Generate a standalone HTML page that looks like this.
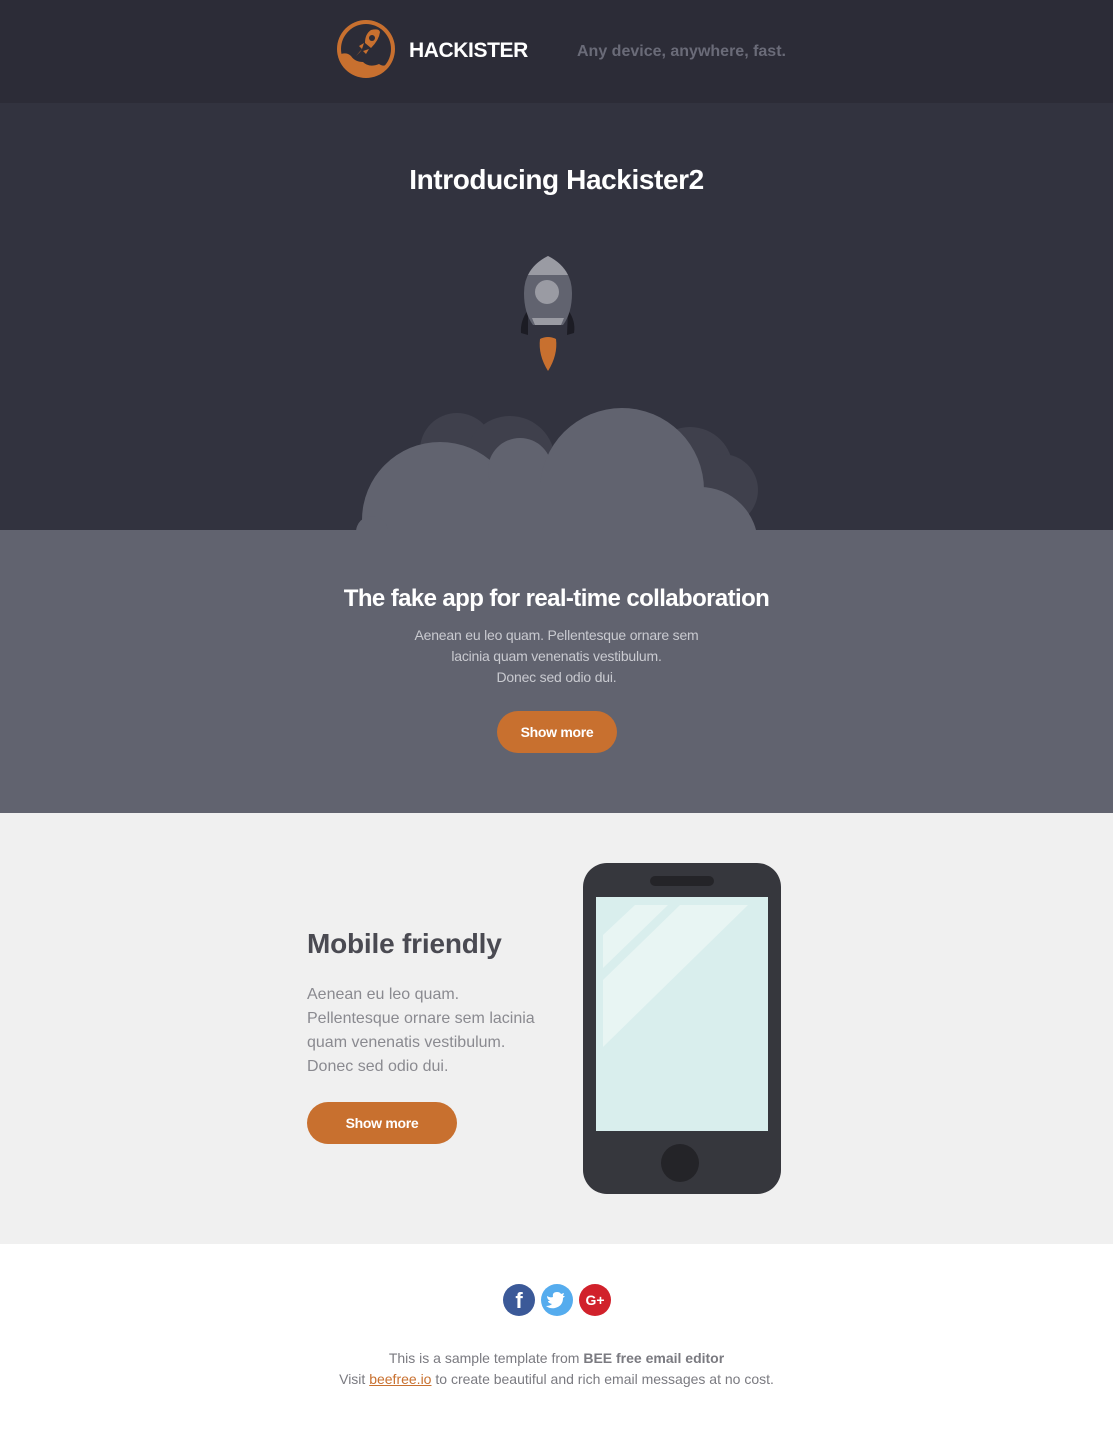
<!DOCTYPE html>
<html><head><meta charset="utf-8"><style>
*{margin:0;padding:0;box-sizing:border-box}
body{width:1113px;height:1437px;font-family:"Liberation Sans",sans-serif;background:#fff;overflow:hidden}
.hdr{height:103px;background:#2c2c37;position:relative}
.hero{height:427px;background:#32333f;position:relative}
.band{height:283px;background:#61636f;position:relative;text-align:center}
.mob{height:431px;background:#f0f0f0;position:relative}
.foot{position:relative;height:193px;text-align:center}
.btn{display:inline-block;background:#c8702f;color:#fff;font-weight:bold;font-size:14px;border-radius:21px;height:42px;line-height:42px;text-align:center;letter-spacing:-0.3px}
</style></head><body>
<div class="hdr">
 <svg style="position:absolute;left:335px;top:18px" width="62" height="62" viewBox="0 0 62 62">
  <circle cx="31" cy="31" r="29" fill="#c8702f"/>
  <circle cx="31" cy="31" r="25" fill="#2c2c37"/>
  <path d="M6 36 Q12 34 16 38 Q20 44 28 44 Q34 50 44 46 Q50 50 54 44 Q52 54 40 57 Q24 60 12 50 Q6 44 6 36Z" fill="#c8702f"/>
  <path d="M36 12 Q44 10 45 14 Q44 22 36 30 L30 25 Q30 16 36 12Z" fill="#c8702f"/>
  <circle cx="37" cy="20" r="3" fill="#2c2c37"/>
  <path d="M29 25 L24 28 L27 31Z M34 31 L31 36 L28 33Z M27 31 L21 38 L25 34Z" fill="#c8702f"/>
 </svg>
 <div style="position:absolute;left:409px;top:39px;color:#fff;font-size:21px;font-weight:bold;letter-spacing:-0.4px">HACKISTER</div>
 <div style="position:absolute;left:577px;top:43px;color:#6a6b78;font-size:16px;font-weight:bold">Any device, anywhere, fast.</div>
</div>
<div class="hero">
 <div style="position:absolute;left:0;width:1113px;top:61px;text-align:center;color:#fff;font-size:28px;font-weight:bold;letter-spacing:-0.4px">Introducing Hackister2</div>
 <svg style="position:absolute;left:0;top:0" width="1113" height="427">
  <path d="M528 207 Q520 218 521 230 L528 232Z" fill="#1c1c24"/>
  <path d="M568 207 Q576 218 574 230 L567 232Z" fill="#1c1c24"/>
  <path d="M548 153 Q524 165 524 190 Q524 210 533 222 L563 222 Q572 210 572 190 Q572 165 548 153Z" fill="#61636f"/>
  <path d="M548 153 Q534 160 528 172 L568 172 Q562 160 548 153Z" fill="#9a9ba3"/>
  <path d="M532 215 L564 215 L561 222 L535 222Z" fill="#9a9ba3"/>
  <circle cx="547" cy="189" r="12" fill="#9a9ba3"/>
  <path d="M540 236 Q548 232 556 236 Q558 252 548 268 Q538 252 540 236Z" fill="#c8702f"/>
  <g fill="#3f404c"><circle cx="457" cy="347" r="37"/>
  <circle cx="510" cy="358" r="45"/><circle cx="690" cy="367" r="43"/><circle cx="722" cy="387" r="36"/></g>
  <g fill="#61636f"><circle cx="440" cy="417" r="78"/><circle cx="520" cy="367" r="32"/><circle cx="622" cy="387" r="82"/>
  <circle cx="700" cy="442" r="58"/><circle cx="372" cy="429" r="16"/><rect x="400" y="380" width="300" height="47"/><rect x="372" y="430" width="380" height="0"/></g>
 </svg>
</div>
<div class="band">
 <div style="position:absolute;width:100%;top:55px;color:#fff;font-size:24px;font-weight:bold;letter-spacing:-0.6px">The fake app for real-time collaboration</div>
 <div style="position:absolute;width:100%;top:95px;color:#c9cad0;font-size:14px;line-height:21px;letter-spacing:-0.2px">Aenean eu leo quam. Pellentesque ornare sem<br>lacinia quam venenatis vestibulum.<br>Donec sed odio dui.</div>
 <div class="btn" style="position:absolute;left:497px;top:181px;width:120px">Show more</div>
</div>
<div class="mob">
 <div style="position:absolute;left:307px;top:115px;color:#4a4a52;font-size:28px;font-weight:bold;letter-spacing:-0.2px">Mobile friendly</div>
 <div style="position:absolute;left:307px;top:170px;color:#8a8a90;font-size:16px;line-height:24px">Aenean eu leo quam.<br>Pellentesque ornare sem lacinia<br>quam venenatis vestibulum.<br>Donec sed odio dui.</div>
 <div class="btn" style="position:absolute;left:307px;top:289px;width:150px">Show more</div>
 <svg style="position:absolute;left:583px;top:50px" width="198" height="331" viewBox="583 863 198 331">
  <rect x="583" y="863" width="198" height="331" rx="24" fill="#36373d"/>
  <rect x="650" y="876" width="64" height="10" rx="5" fill="#242428"/>
  <rect x="596" y="897" width="172" height="234" fill="#d9eeed"/>
  <path d="M603 935 L635 905 L668 905 L603 968Z M603 980 L680 905 L748 905 L603 1047Z" fill="#e8f5f3"/>
  <circle cx="680" cy="1163" r="19" fill="#242428"/>
 </svg>
</div>
<div class="foot">
 <svg style="position:absolute;left:503px;top:40px" width="108" height="32">
  <circle cx="16" cy="16" r="16" fill="#3b5998"/>
  <text x="16" y="24" fill="#fff" font-family="Liberation Sans" font-weight="bold" font-size="22" text-anchor="middle">f</text>
  <circle cx="54" cy="16" r="16" fill="#55acee"/>
  <path d="M44 12 Q47 14 50 13 Q49 8 54 8 Q57 8 58 10 L61 9 L60 12 L62 12 L60 14 Q60 22 52 24 Q47 25 43 22 Q47 22 49 20 Q45 19 45 17 L47 17 Q44 15 44 12Z" fill="#fff"/>
  <circle cx="92" cy="16" r="16" fill="#d1212b"/>
  <text x="92" y="21" fill="#fff" font-family="Liberation Sans" font-weight="bold" font-size="14" text-anchor="middle">G+</text>
 </svg>
 <div style="position:absolute;width:100%;top:104px;color:#7a7a80;font-size:14px;line-height:21px">This is a sample template from <b>BEE free email editor</b><br>Visit <span style="color:#c8702f;text-decoration:underline">beefree.io</span> to create beautiful and rich email messages at no cost.</div>
</div>
</body></html>
